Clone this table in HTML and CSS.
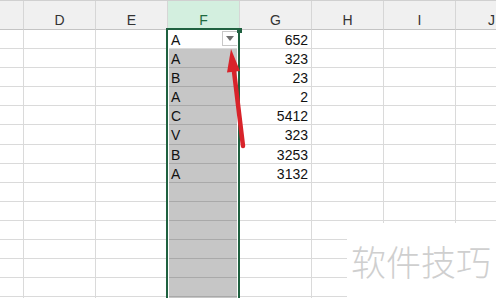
FILE: index.html
```html
<!DOCTYPE html>
<html>
<head>
<meta name="viewport" content="width=device-width, initial-scale=1">
<title>Sheet1</title>
<link rel="stylesheet" href="styles.css">
</head>
<body>

<div class="sheet">
  <!-- column headers -->
  <div class="row head">
    <div class="cell"></div>
    <div class="cell">D</div>
    <div class="cell">E</div>
    <div class="cell colsel">F</div>
    <div class="cell">G</div>
    <div class="cell">H</div>
    <div class="cell">I</div>
    <div class="cell">J</div>
  </div>

  <div class="row">
    <div class="cell"></div><div class="cell"></div><div class="cell"></div>
    <div class="cell active"><span>A</span><span class="filter"></span></div>
    <div class="cell num">652</div>
    <div class="cell"></div><div class="cell"></div><div class="cell"></div>
  </div>
  <div class="row">
    <div class="cell"></div><div class="cell"></div><div class="cell"></div>
    <div class="cell sel">A</div>
    <div class="cell num">323</div>
    <div class="cell"></div><div class="cell"></div><div class="cell"></div>
  </div>
  <div class="row">
    <div class="cell"></div><div class="cell"></div><div class="cell"></div>
    <div class="cell sel">B</div>
    <div class="cell num">23</div>
    <div class="cell"></div><div class="cell"></div><div class="cell"></div>
  </div>
  <div class="row">
    <div class="cell"></div><div class="cell"></div><div class="cell"></div>
    <div class="cell sel">A</div>
    <div class="cell num">2</div>
    <div class="cell"></div><div class="cell"></div><div class="cell"></div>
  </div>
  <div class="row">
    <div class="cell"></div><div class="cell"></div><div class="cell"></div>
    <div class="cell sel">C</div>
    <div class="cell num">5412</div>
    <div class="cell"></div><div class="cell"></div><div class="cell"></div>
  </div>
  <div class="row">
    <div class="cell"></div><div class="cell"></div><div class="cell"></div>
    <div class="cell sel">V</div>
    <div class="cell num">323</div>
    <div class="cell"></div><div class="cell"></div><div class="cell"></div>
  </div>
  <div class="row">
    <div class="cell"></div><div class="cell"></div><div class="cell"></div>
    <div class="cell sel">B</div>
    <div class="cell num">3253</div>
    <div class="cell"></div><div class="cell"></div><div class="cell"></div>
  </div>
  <div class="row">
    <div class="cell"></div><div class="cell"></div><div class="cell"></div>
    <div class="cell sel">A</div>
    <div class="cell num">3132</div>
    <div class="cell"></div><div class="cell"></div><div class="cell"></div>
  </div>
  <div class="row">
    <div class="cell"></div><div class="cell"></div><div class="cell"></div>
    <div class="cell sel"></div>
    <div class="cell"></div><div class="cell"></div><div class="cell"></div><div class="cell"></div>
  </div>
  <div class="row">
    <div class="cell"></div><div class="cell"></div><div class="cell"></div>
    <div class="cell sel"></div>
    <div class="cell"></div><div class="cell"></div><div class="cell"></div><div class="cell"></div>
  </div>
  <div class="row">
    <div class="cell"></div><div class="cell"></div><div class="cell"></div>
    <div class="cell sel"></div>
    <div class="cell"></div><div class="cell"></div><div class="cell"></div><div class="cell"></div>
  </div>
  <div class="row">
    <div class="cell"></div><div class="cell"></div><div class="cell"></div>
    <div class="cell sel"></div>
    <div class="cell"></div><div class="cell"></div><div class="cell"></div><div class="cell"></div>
  </div>
  <div class="row">
    <div class="cell"></div><div class="cell"></div><div class="cell"></div>
    <div class="cell sel"></div>
    <div class="cell"></div><div class="cell"></div><div class="cell"></div><div class="cell"></div>
  </div>
  <div class="row">
    <div class="cell"></div><div class="cell"></div><div class="cell"></div>
    <div class="cell sel"></div>
    <div class="cell"></div><div class="cell"></div><div class="cell"></div><div class="cell"></div>
  </div>
  <div class="row">
    <div class="cell"></div><div class="cell"></div><div class="cell"></div>
    <div class="cell sel"></div>
    <div class="cell"></div><div class="cell"></div><div class="cell"></div><div class="cell"></div>
  </div>

  <!-- selected column outline -->
  <div class="selection"></div>

  <!-- red pointer to the filter button -->
  <svg class="arrow" width="496" height="298" viewBox="0 0 496 298">
    <line x1="243" y1="146" x2="233.6" y2="68" stroke="#d8232a" stroke-width="4.5" stroke-linecap="round"/>
    <polygon points="231,49 227,72.5 240,71" fill="#d8232a"/>
  </svg>

  <div class="mark">软件技巧</div>
</div>

</body>
</html>
```

FILE: styles.css
```css
body {
  margin: 0;
  overflow: hidden;
  background: #fff;
}

.sheet {
  position: relative;
  width: 496px;
  height: 298px;
  overflow: hidden;
  font-family: "Liberation Sans", Arial, sans-serif;
  font-size: 14px;
  color: #111;
}

.row {
  display: grid;
  grid-template-columns: 24px repeat(7, 72px);
  height: 19.1px;
}

.cell {
  box-sizing: border-box;
  border-right: 1px solid #dadada;
  border-bottom: 1px solid #dadada;
  padding: 1px 3px 0;
  line-height: 18px;
  white-space: nowrap;
  overflow: hidden;
}

/* header strip */
.head {
  height: 30px;
  background: #f0f0f0;
  border-top: 1px solid #d0d0d0;
  box-sizing: border-box;
}

.head .cell {
  border-right-color: #d6d6d6;
  border-bottom-color: #c4c4c4;
  text-align: center;
  padding-top: 10px;
  color: #333;
}

.head .colsel {
  background: #d3efdf;
  color: #1e6a40;
}

.num {
  text-align: right;
}

.sel {
  background: #c6c6c6;
  border-bottom-color: #a9a9a9;
}

.active {
  display: flex;
  justify-content: space-between;
  padding-right: 1px;
}

/* autofilter drop button */
.filter {
  width: 16px;
  height: 15px;
  box-sizing: border-box;
  border: 1px solid #c8c8c8;
  background: #fff;
  display: flex;
  align-items: center;
  justify-content: center;
}

.filter::before {
  content: "";
  border-left: 4px solid transparent;
  border-right: 4px solid transparent;
  border-top: 5px solid #6f6f6f;
}

.selection {
  position: absolute;
  left: 166px;
  top: 28px;
  width: 74px;
  height: 300px;
  box-sizing: border-box;
  border: 2px solid #1f6140;
  box-shadow: inset 0 0 0 1px #fff;
}

/* fill handle */
.selection::after {
  content: "";
  position: absolute;
  right: -4px;
  top: -2px;
  width: 5px;
  height: 5px;
  background: #1f6140;
}

.arrow {
  position: absolute;
  left: 0;
  top: 0;
}

.mark {
  position: absolute;
  left: 347px;
  top: 223px;
  width: 149px;
  height: 75px;
  box-sizing: border-box;
  padding: 20px 0 0 4px;
  background: #fff;
  font-family: "Noto Sans CJK SC", sans-serif;
  font-weight: 300;
  font-size: 35px;
  line-height: 35px;
  color: #cfcfcf;
}
```
